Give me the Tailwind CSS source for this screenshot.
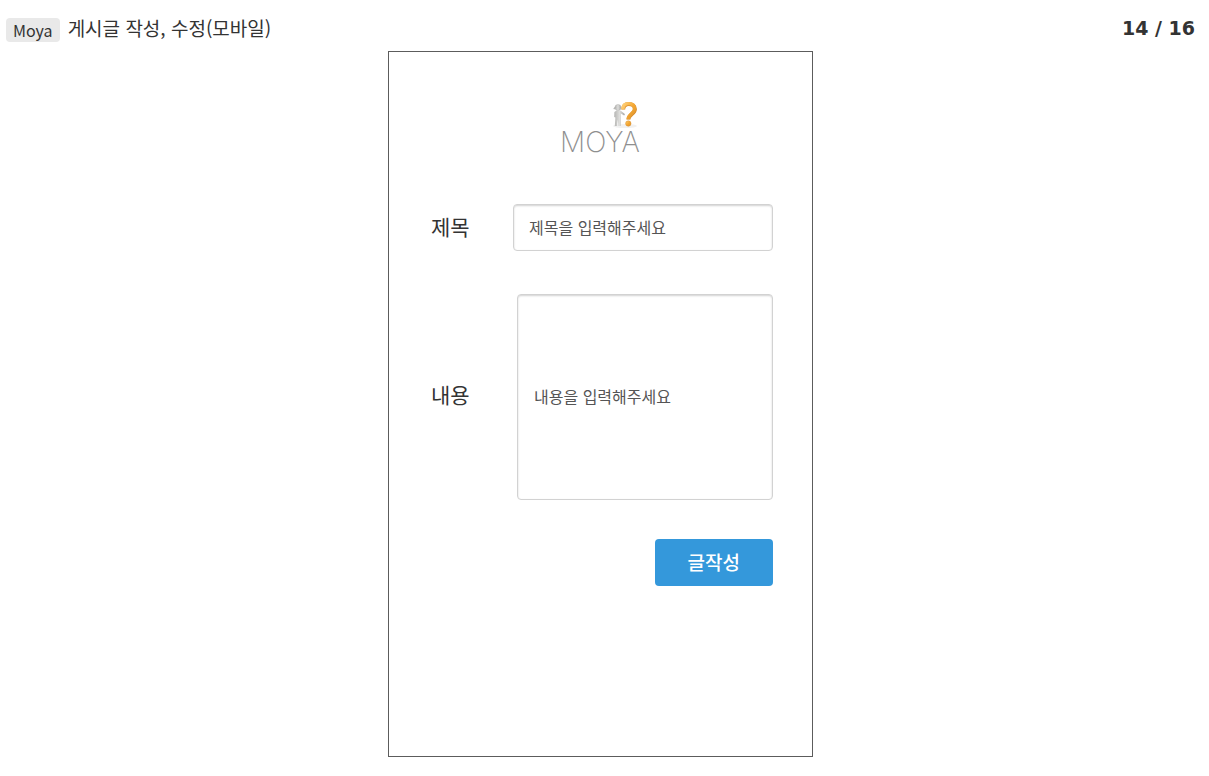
<!DOCTYPE html>
<html lang="ko">
<head>
<meta charset="utf-8">
<meta name="viewport" content="width=device-width, initial-scale=1">
<title>Moya - 게시글 작성, 수정(모바일)</title>
<script src="https://cdn.jsdelivr.net/npm/@tailwindcss/browser@4"></script>
</head>
<body class="bg-white font-['Noto_Sans_CJK_KR',sans-serif] text-[#333333]">
<header class="flex items-center justify-between pt-3.5 pr-3.5 pl-1.5">
  <div class="flex items-center gap-2">
    <span class="mt-1 rounded-[4px] bg-[#e9e9e9] px-[7px] text-[16px] leading-6">Moya</span>
    <h1 class="text-[19px] leading-6">게시글 작성, 수정(모바일)</h1>
  </div>
  <p class="font-['DejaVu_Sans',sans-serif] text-[19px] leading-6 font-bold">14 / 16</p>
</header>
<main class="mt-[9px] pr-2 pb-4">
  <form class="mx-auto flex min-h-[706px] max-w-[425px] flex-col border border-[#5c5c5c] pt-12 pr-[39px] pb-12 pl-[42px]">
    <div class="mr-1 flex flex-col items-center">
      <svg class="ml-12 h-[30px] w-8" viewBox="0 0 32 30" aria-hidden="true">
        <defs>
          <linearGradient id="gold" x1="0" y1="0" x2="1" y2="1">
            <stop offset="0" stop-color="#ffd078"/><stop offset="0.5" stop-color="#f5a833"/><stop offset="1" stop-color="#dd922c"/>
          </linearGradient>
          <linearGradient id="gray" x1="0" y1="0" x2="1" y2="0">
            <stop offset="0" stop-color="#b4b4b2"/><stop offset="0.5" stop-color="#dededc"/><stop offset="1" stop-color="#a5a5a3"/>
          </linearGradient>
        </defs>
        <ellipse cx="17" cy="26" rx="12" ry="2" fill="#f1f1f1"/>
        <path d="M8.600 10.500h3.800l3.900 3 .6 1-.8.9-3.300-1.800.2 12.400h-2.600l-.6-6.500-.7 6.500H6.800l.6-8.500-1.200-.4.2-5.200z" fill="url(#gray)"/>
        <circle cx="10" cy="7.500" r="3" fill="url(#gray)" stroke="#b0b0ae" stroke-width=".5"/>
        <path d="M5.800 9.200l1.800-2.200" stroke="#b5b5b3" stroke-width="1.300"/>
        <path d="M15.200 9.500C15.200 5.300 17.400 3.900 20.700 3.900c4 0 6.200 2.200 6.200 5.300 0 4.700-6.400 5-6.400 10.300" fill="none" stroke="#d58b2c" stroke-width="4"/>
        <path d="M15 9.200C15 5 17.200 3.600 20.500 3.600c4 0 6.100 2.200 6.100 5.300 0 4.700-6.400 5-6.400 10.300" fill="none" stroke="url(#gold)" stroke-width="3.400"/>
        <circle cx="20.300" cy="23.500" r="2.700" fill="url(#gold)" stroke="#d58b2c" stroke-width=".5"/>
      </svg>
      <span class="font-['Inter',sans-serif] text-[28px] leading-6 font-extralight text-[#8f8f8f]">MOYA</span>
    </div>
    <div class="mt-[50px] flex items-center">
      <label for="title" class="w-[82px] shrink-0 pb-1 text-[21px] leading-8">제목</label>
      <input id="title" type="text" placeholder="제목을 입력해주세요" class="h-[47px] min-w-0 flex-1 rounded-[4px] border border-[#d2d2d2] px-[15px] pb-0.5 text-[16px] leading-6 shadow-[inset_0_1px_2px_#d2d2d2] placeholder:text-[#555555]">
    </div>
    <div class="mt-[43px] flex items-center">
      <label for="content" class="w-[86px] shrink-0 pb-1.5 text-[21px] leading-8">내용</label>
      <textarea id="content" placeholder="내용을 입력해주세요" class="h-[206px] min-w-0 flex-1 resize-none rounded-[4px] border border-[#d2d2d2] px-4 py-[89px] text-[16px] leading-6 shadow-[inset_0_1px_2px_#d2d2d2] placeholder:text-[#555555]"></textarea>
    </div>
    <button type="submit" class="mt-[39px] h-[47px] self-end rounded-[4px] bg-[#3498db] px-[33px] pb-0.5 text-[19px] leading-6 font-medium text-white">글작성</button>
  </form>
</main>
</body>
</html>
